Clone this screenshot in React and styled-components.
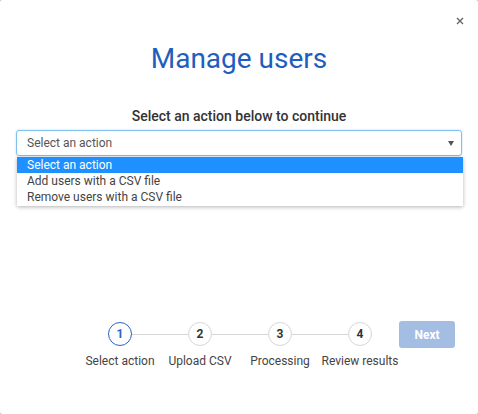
import React from "react";
import styled, { createGlobalStyle } from "styled-components";

const Global = createGlobalStyle`
  html, body { margin: 0; padding: 0; background: #b5b5b5; }
  body { font-family: Roboto, "Liberation Sans", sans-serif; }
`;

const Dialog = styled.div`
  position: relative;
  width: 478px;
  height: 414px;
  box-sizing: border-box;
  background: #fff;
  border-radius: 2px;
  display: flex;
  flex-direction: column;
  padding: 0 16px;
`;

const Close = styled.button`
  position: absolute;
  top: 14px;
  right: 11px;
  border: 0;
  background: transparent;
  padding: 0;
  width: 14px;
  height: 14px;
  display: flex;
  align-items: center;
  justify-content: center;
  cursor: pointer;
`;

const Title = styled.h1`
  margin: 41px 0 0;
  font-size: 28px;
  font-weight: 400;
  line-height: 36px;
  text-align: center;
  color: #1f5ebd;
`;

const Subtitle = styled.div`
  margin-top: 30px;
  font-size: 14px;
  font-weight: 500;
  line-height: 18px;
  text-align: center;
  color: #333;
`;

const SelectWrap = styled.div`
  position: relative;
  margin-top: 5px;
`;

const SelectBox = styled.div`
  height: 26px;
  box-sizing: border-box;
  border: 1px solid #7fc1ee;
  border-radius: 3px;
  box-shadow: 0 0 2px rgba(100, 180, 240, 0.5);
  display: flex;
  align-items: center;
  justify-content: space-between;
  padding: 0 7px 0 10px;
  font-size: 12px;
  color: #555;
`;

const Caret = styled.span`
  width: 0;
  height: 0;
  border-left: 3.5px solid transparent;
  border-right: 3.5px solid transparent;
  border-top: 5px solid #555;
`;

const Menu = styled.ul`
  position: absolute;
  left: 1px;
  right: -1px;
  top: 27px;
  margin: 0;
  padding: 0 0 1px;
  list-style: none;
  background: #fff;
  box-shadow: 0 1px 4px rgba(0, 0, 0, 0.3);
`;

const Option = styled.li`
  height: 16px;
  line-height: 16px;
  padding: 0 10px;
  font-size: 12px;
  color: ${(p) => (p.$active ? "#fff" : "#444")};
  background: ${(p) => (p.$active ? "#1e90ff" : "transparent")};
`;

const Footer = styled.div`
  margin-top: auto;
  margin-bottom: 46px;
  display: flex;
  align-items: flex-start;
  padding-left: 64px;
`;

const Steps = styled.ol`
  display: flex;
  margin: 0;
  padding: 0;
  list-style: none;
`;

const Step = styled.li`
  position: relative;
  width: 80px;
  display: flex;
  flex-direction: column;
  align-items: center;

  &:not(:last-child)::after {
    content: "";
    position: absolute;
    top: 12px;
    left: 52px;
    width: 56px;
    height: 1px;
    background: #d6d6d6;
  }
`;

const Circle = styled.span`
  width: 24px;
  height: 24px;
  box-sizing: border-box;
  border-radius: 50%;
  border: 1.5px solid ${(p) => (p.$active ? "#2b63c4" : "#d6d6d6")};
  color: ${(p) => (p.$active ? "#2b63c4" : "#333")};
  display: flex;
  align-items: center;
  justify-content: center;
  font-size: 12px;
  font-weight: 700;
`;

const StepLabel = styled.span`
  margin-top: 8px;
  font-size: 12px;
  color: #444;
  white-space: nowrap;
`;

const NextBtn = styled.button`
  margin: -1px 0 0 -1px;
  width: 56px;
  height: 27px;
  border: 0;
  border-radius: 3px;
  background: #a4bde3;
  color: #fff;
  font-family: inherit;
  font-size: 12px;
  font-weight: 700;
`;

const STEPS = ["Select action", "Upload CSV", "Processing", "Review results"];
const OPTIONS = [
  "Select an action",
  "Add users with a CSV file",
  "Remove users with a CSV file",
];

export default function App() {
  return (
    <>
      <Global />
      <Dialog>
        <Close aria-label="Close">
          <svg width="8" height="8" viewBox="0 0 8 8">
            <path d="M1 1L7 7M7 1L1 7" stroke="#666" strokeWidth="1.4" />
          </svg>
        </Close>
        <Title>Manage users</Title>
        <Subtitle>Select an action below to continue</Subtitle>
        <SelectWrap>
          <SelectBox>
            <span>Select an action</span>
            <Caret />
          </SelectBox>
          <Menu>
            {OPTIONS.map((o, i) => (
              <Option key={o} $active={i === 0}>
                {o}
              </Option>
            ))}
          </Menu>
        </SelectWrap>
        <Footer>
          <Steps>
            {STEPS.map((s, i) => (
              <Step key={s}>
                <Circle $active={i === 0}>{i + 1}</Circle>
                <StepLabel>{s}</StepLabel>
              </Step>
            ))}
          </Steps>
          <NextBtn disabled>Next</NextBtn>
        </Footer>
      </Dialog>
    </>
  );
}
